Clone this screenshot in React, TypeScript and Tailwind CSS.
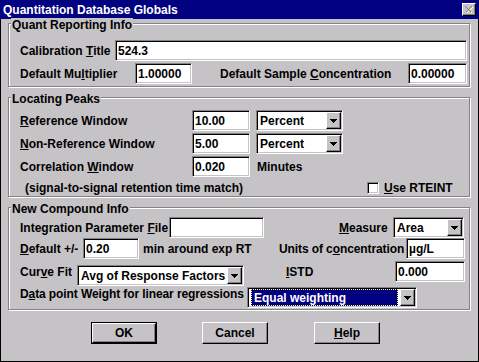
import React from "react";

const sunken =
  "border border-t-[#848284] border-l-[#848284] border-b-white border-r-white shadow-[inset_1px_1px_0_#000,inset_-1px_-1px_0_#c6c3c6]";
const raised =
  "border border-t-white border-l-white border-r-black border-b-black shadow-[inset_-1px_-1px_0_#848284]";

function Field({ className = "", value = "" }: { className?: string; value?: string }) {
  return (
    <div
      className={`${sunken} bg-white h-[21px] shrink-0 flex items-center pl-[2px] whitespace-nowrap overflow-hidden ${className}`}
    >
      {value}
    </div>
  );
}

function Arrow() {
  return (
    <svg width="7" height="4" viewBox="0 0 7 4" shapeRendering="crispEdges">
      <rect x="0" y="0" width="7" height="1" fill="#000" />
      <rect x="1" y="1" width="5" height="1" fill="#000" />
      <rect x="2" y="2" width="3" height="1" fill="#000" />
      <rect x="3" y="3" width="1" height="1" fill="#000" />
    </svg>
  );
}

function Select({
  className = "",
  value,
  highlight = false,
}: {
  className?: string;
  value: string;
  highlight?: boolean;
}) {
  return (
    <div className={`${sunken} bg-white h-[21px] shrink-0 flex p-[1px] ${className}`}>
      <div className="flex-1 flex min-w-0">
        {highlight ? (
          <div className="mx-[2px] flex-1 bg-[#000080] text-white border border-dotted border-[#ffff80] flex items-center pl-[2px] whitespace-nowrap">
            {value}
          </div>
        ) : (
          <span className="pl-[2px] flex items-center whitespace-nowrap">{value}</span>
        )}
      </div>
      <div className={`${raised} bg-[#c6c3c6] w-[15px] h-full flex items-center justify-center shrink-0`}>
        <Arrow />
      </div>
    </div>
  );
}

function Group({
  title,
  className = "",
  children,
}: {
  title: string;
  className?: string;
  children: React.ReactNode;
}) {
  return (
    <div
      className={`relative border border-[#848284] shadow-[inset_1px_1px_0_#fff,1px_1px_0_#fff] w-[462px] ml-[7px] shrink-0 ${className}`}
    >
      <span className="absolute left-[2px] top-[-6px] bg-[#c6c3c6] px-[1px] leading-[14px] whitespace-nowrap">
        {title}
      </span>
      {children}
    </div>
  );
}

function Button({ children, isDefault = false, className = "" }: { children: React.ReactNode; isDefault?: boolean; className?: string }) {
  if (isDefault) {
    return (
      <div className={`border border-black w-[66px] h-[22px] shrink-0 ${className}`}>
        <div className={`${raised} w-full h-full flex items-center justify-center`}>{children}</div>
      </div>
    );
  }
  return (
    <div className={`${raised} w-[66px] h-[22px] shrink-0 flex items-center justify-center ${className}`}>
      {children}
    </div>
  );
}

export default function App() {
  return (
    <div className="w-[479px] h-[362px] flex flex-col bg-[#c6c3c6] font-['Liberation_Sans',Arial,sans-serif] font-bold text-[12px] leading-[14px] text-black overflow-hidden">
      {/* Title bar */}
      <div className="h-[19px] bg-[#000080] flex items-center justify-between pl-[3px] pr-[3px] text-white shrink-0">
        <span className="whitespace-nowrap">Quantitation Database Globals</span>
        <div className={`${raised} bg-[#c6c3c6] w-[14px] h-[13px] flex items-center justify-center`}>
          <svg width="9" height="8" viewBox="0 0 9 8" shapeRendering="crispEdges">
            <path d="M1.5 1.5 L7.5 7.5 M7.5 1.5 L1.5 7.5" stroke="#fff" strokeWidth="1.4" />
            <path d="M0.5 0.5 L6.5 6.5 M6.5 0.5 L0.5 6.5" stroke="#848284" strokeWidth="1.4" />
          </svg>
        </div>
      </div>

      {/* Body */}
      <div className="flex-1 border-l border-r border-b border-black flex flex-col">
        {/* Quant Reporting Info */}
        <Group title="Quant Reporting Info" className="mt-[4px] h-[64px] pt-[16px] pl-[11px]">
          <div className="flex items-center h-[21px]">
            <span className="w-[95px] shrink-0 whitespace-nowrap">
              Calibration <u>T</u>itle
            </span>
            <Field className="w-[352px]" value="524.3" />
          </div>
          <div className="flex items-center h-[21px] mt-[2px]">
            <span className="w-[115px] shrink-0 whitespace-nowrap">
              Default Mu<u>l</u>tiplier
            </span>
            <Field className="w-[57px]" value="1.00000" />
            <span className="w-[188px] ml-[28px] shrink-0 whitespace-nowrap">
              Default Sample <u>C</u>oncentration
            </span>
            <Field className="w-[59px]" value="0.00000" />
          </div>
        </Group>

        {/* Locating Peaks */}
        <Group title="Locating Peaks" className="mt-[10px] h-[100px] pt-[12px] pl-[11px]">
          <div className="flex items-center h-[21px]">
            <span className="w-[172px] shrink-0 whitespace-nowrap">
              <u>R</u>eference Window
            </span>
            <Field className="w-[58px]" value="10.00" />
            <Select className="w-[87px] ml-[6px]" value="Percent" />
          </div>
          <div className="flex items-center h-[21px] mt-[2px]">
            <span className="w-[172px] shrink-0 whitespace-nowrap">
              <u>N</u>on-Reference Window
            </span>
            <Field className="w-[58px]" value="5.00" />
            <Select className="w-[87px] ml-[6px]" value="Percent" />
          </div>
          <div className="flex items-center h-[21px] mt-[2px]">
            <span className="w-[172px] shrink-0 whitespace-nowrap">
              Correlation <u>W</u>indow
            </span>
            <Field className="w-[58px]" value="0.020" />
            <span className="ml-[7px] whitespace-nowrap">Minutes</span>
          </div>
          <div className="flex items-center h-[15px] mt-[3px]">
            <span className="ml-[5px] w-[342px] shrink-0 whitespace-nowrap">
              (signal-to-signal retention time match)
            </span>
            <div className={`${sunken} bg-white w-[12px] h-[12px] shrink-0`} />
            <span className="ml-[5px] whitespace-nowrap">
              <u>U</u>se RTEINT
            </span>
          </div>
        </Group>

        {/* New Compound Info */}
        <Group title="New Compound Info" className="mt-[10px] h-[103px] pt-[9px] pl-[11px]">
          <div className="flex items-center h-[21px]">
            <span className="w-[149px] shrink-0 whitespace-nowrap">
              Integration Parameter <u>F</u>ile
            </span>
            <Field className="w-[95px]" />
            <span className="ml-[75px] w-[54px] shrink-0 whitespace-nowrap">
              <u>M</u>easure
            </span>
            <Select className="w-[71px]" value="Area" />
          </div>
          <div className="flex items-center h-[21px]">
            <span className="w-[63px] shrink-0 whitespace-nowrap">
              <u>D</u>efault +/-
            </span>
            <Field className="w-[56px]" value="0.20" />
            <span className="ml-[4px] w-[136px] shrink-0 whitespace-nowrap">min around exp RT</span>
            <span className="w-[127px] shrink-0 whitespace-nowrap tracking-[-0.1px]">
              Units of c<u>o</u>ncentration
            </span>
            <Field className="w-[59px]" value="µg/L" />
          </div>
          <div className="flex items-start h-[25px] mt-[2px]">
            <span className="mt-[4px] w-[57px] shrink-0 whitespace-nowrap">
              Cur<u>v</u>e Fit
            </span>
            <Select className="mt-[4px] w-[167px]" value="Avg of Response Factors" />
            <span className="mt-[4px] ml-[42px] w-[109px] shrink-0 whitespace-nowrap">
              <u>I</u>STD
            </span>
            <Field className="w-[70px]" value="0.000" />
          </div>
          <div className="flex items-start h-[21px] mt-[1px]">
            <span className="w-[227px] shrink-0 whitespace-nowrap tracking-[-0.1px]">
              D<u>a</u>ta point Weight for linear regressions
            </span>
            <Select className="w-[170px]" value="Equal weighting" highlight />
          </div>
        </Group>

        {/* Buttons */}
        <div className="flex mt-[12px] ml-[90px]">
          <Button isDefault>OK</Button>
          <Button className="ml-[45px]">Cancel</Button>
          <Button className="ml-[46px]">
            <span>
              <u>H</u>elp
            </span>
          </Button>
        </div>
      </div>
    </div>
  );
}
